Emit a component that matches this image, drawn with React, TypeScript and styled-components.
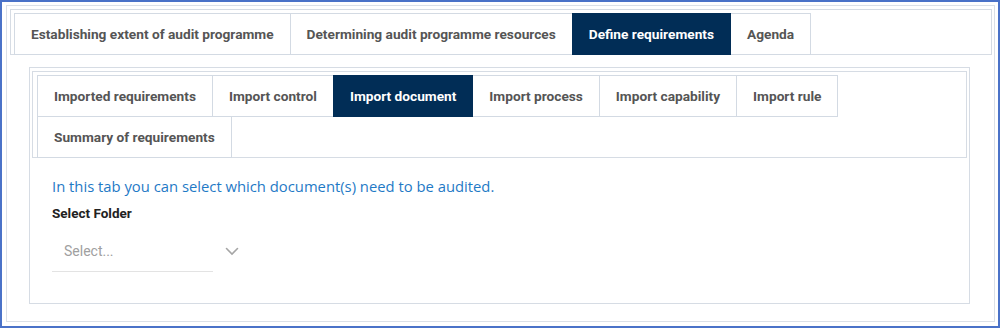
import React, { useState } from 'react';
import styled, { createGlobalStyle } from 'styled-components';

const GlobalStyle = createGlobalStyle`
  html, body {
    margin: 0;
    padding: 0;
    background: #ffffff;
  }
  * {
    box-sizing: border-box;
  }
`;

const mainTabs = [
  'Establishing extent of audit programme',
  'Determining audit programme resources',
  'Define requirements',
  'Agenda',
];

const subTabs = [
  'Imported requirements',
  'Import control',
  'Import document',
  'Import process',
  'Import capability',
  'Import rule',
  'Summary of requirements',
];

const Chevron = () => (
  <svg width="14" height="9" viewBox="0 0 14 9" fill="none">
    <path d="M1.5 1.5 L7 7 L12.5 1.5" stroke="#a5a5a5" strokeWidth="1.6" strokeLinecap="round" />
  </svg>
);

const App = () => {
  const [mainTab, setMainTab] = useState(2);
  const [subTab, setSubTab] = useState(2);

  return (
    <>
      <GlobalStyle />
      <Frame>
        <Panel>
          <TabBar>
            {mainTabs.map((t, i) => (
              <Tab key={t} $active={i === mainTab} onClick={() => setMainTab(i)}>
                {t}
              </Tab>
            ))}
          </TabBar>
          <Body>
            <InnerPanel>
              <SubTabBar>
                {subTabs.map((t, i) => (
                  <Tab key={t} $active={i === subTab} onClick={() => setSubTab(i)}>
                    {t}
                  </Tab>
                ))}
              </SubTabBar>
              <Content>
                <Info>In this tab you can select which document(s) need to be audited.</Info>
                <FieldLabel>Select Folder</FieldLabel>
                <SelectRow>
                  <SelectBox>
                    <Placeholder>Select...</Placeholder>
                  </SelectBox>
                  <Chevron />
                </SelectRow>
              </Content>
            </InnerPanel>
          </Body>
        </Panel>
      </Frame>
    </>
  );
};

export default App;

const Frame = styled.div`
  width: 1000px;
  height: 328px;
  border: 2px solid #4a72c8;
  padding: 3px 3px 4px 4px;
  background: #ffffff;
`;

const Panel = styled.div`
  height: 100%;
  border: 1px solid #dbe0e7;
  padding: 3px 2px 0 3px;
  display: flex;
  flex-direction: column;
`;

const TabBar = styled.div`
  display: flex;
  flex-wrap: wrap;
  border: 1px solid #d6dce4;
  padding: 3px 2px 0 3px;
`;

const SubTabBar = styled(TabBar)`
  padding: 3px 3px 0 4px;
  margin: 3px 2px 0 2px;
`;

const Tab = styled.div<{ $active?: boolean }>`
  height: 42px;
  margin: 0 -1px -1px 0;
  padding: 0 16px;
  display: flex;
  align-items: center;
  border: 1px solid ${(p) => (p.$active ? '#012d56' : '#d3dae3')};
  background: ${(p) => (p.$active ? '#012d56' : '#ffffff')};
  color: ${(p) => (p.$active ? '#ffffff' : '#555555')};
  font-family: Roboto, 'Liberation Sans', sans-serif;
  font-weight: 700;
  font-size: 13.7px;
  white-space: nowrap;
  cursor: pointer;
  position: relative;
  z-index: ${(p) => (p.$active ? 1 : 0)};
`;

const Body = styled.div`
  flex: 1;
  padding: 12px 22px 17px 19px;
  display: flex;
`;

const InnerPanel = styled.div`
  flex: 1;
  border: 1px solid #d6dce4;
  display: flex;
  flex-direction: column;
`;

const Content = styled.div`
  padding: 18px 20px 0 22px;
`;

const Info = styled.div`
  font-family: 'Open Sans', 'Noto Sans', sans-serif;
  font-size: 14.8px;
  color: #1f7ac6;
  line-height: 20px;
`;

const FieldLabel = styled.div`
  margin-top: 9px;
  font-family: Roboto, 'Liberation Sans', sans-serif;
  font-size: 13.5px;
  font-weight: 700;
  color: #222222;
  line-height: 16px;
`;

const SelectRow = styled.div`
  display: flex;
  align-items: center;
  gap: 12px;
  margin-top: 9px;
`;

const SelectBox = styled.div`
  width: 161px;
  height: 42px;
  padding-left: 12px;
  display: flex;
  align-items: center;
  border-bottom: 1px solid #e3e3e3;
`;

const Placeholder = styled.span`
  font-family: Roboto, 'Liberation Sans', sans-serif;
  font-size: 14px;
  color: #a0a0a0;
`;
